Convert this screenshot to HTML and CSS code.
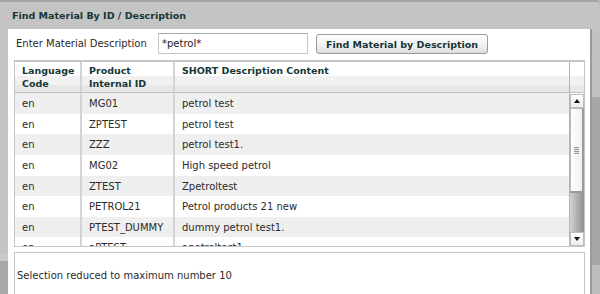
FILE: index.html
```html
<!DOCTYPE html>
<html lang="en">
<head>
    <meta charset="UTF-8">
    <meta name="viewport" content="width=device-width, initial-scale=1.0">
    <title>Find Material By ID / Description</title>
    <link rel="stylesheet" href="styles.css">
</head>
<body>
    <div class="window">
        <div class="title-bar">Find Material By ID / Description</div>
        <div class="frame">
            <div class="gutter-left"></div>
            <div class="content">
                <div class="search-row">
                    <label for="matdesc">Enter Material Description</label>
                    <input type="text" id="matdesc" value="*petrol*">
                    <button type="button">Find Material by Description</button>
                </div>
                <div class="grid">
                    <div class="grid-main">
                        <div class="grid-head">
                            <div class="cell c1">Language<br>Code</div>
                            <div class="cell c2">Product<br>Internal ID</div>
                            <div class="cell c3">SHORT Description Content</div>
                        </div>
                        <div class="grid-body">
                            <div class="row alt"><div class="cell c1">en</div><div class="cell c2">MG01</div><div class="cell c3">petrol test</div></div>
                            <div class="row"><div class="cell c1">en</div><div class="cell c2">ZPTEST</div><div class="cell c3">petrol test</div></div>
                            <div class="row alt"><div class="cell c1">en</div><div class="cell c2">ZZZ</div><div class="cell c3">petrol test1.</div></div>
                            <div class="row"><div class="cell c1">en</div><div class="cell c2">MG02</div><div class="cell c3">High speed petrol</div></div>
                            <div class="row alt"><div class="cell c1">en</div><div class="cell c2">ZTEST</div><div class="cell c3">Zpetroltest</div></div>
                            <div class="row"><div class="cell c1">en</div><div class="cell c2">PETROL21</div><div class="cell c3">Petrol products 21 new</div></div>
                            <div class="row alt"><div class="cell c1">en</div><div class="cell c2">PTEST_DUMMY</div><div class="cell c3">dummy petrol test1.</div></div>
                            <div class="row"><div class="cell c1">en</div><div class="cell c2">aPTEST</div><div class="cell c3">apetroltest1</div></div>
                        </div>
                    </div>
                    <div class="scroll-col">
                        <div class="scroll-head"></div>
                        <div class="scrollbar">
                            <div class="sb-btn"><span class="arrow-up"></span></div>
                            <div class="sb-thumb"><span class="grip"></span></div>
                            <div class="sb-track"></div>
                            <div class="sb-btn"><span class="arrow-down"></span></div>
                        </div>
                    </div>
                </div>
                <div class="message">Selection reduced to maximum number 10</div>
            </div>
            <div class="gutter-right"></div>
        </div>
    </div>
</body>
</html>
```

FILE: styles.css
```css
html, body {
    margin: 0;
    padding: 0;
    height: 294px;
    overflow: hidden;
}
body {
    font-family: "DejaVu Sans", Verdana, sans-serif;
    font-size: 10px;
    color: #2b2b2b;
    background-color: #c2c2c2;
}
.window {
    height: 294px;
    display: flex;
    flex-direction: column;
}
.title-bar {
    height: 28px;
    border-top: 2px solid #a5a5a5;
    background-color: #c4c4c4;
    border-top-right-radius: 4px;
    padding-left: 12px;
    line-height: 27px;
    font-size: 9.5px;
    font-weight: bold;
    color: #143636;
}
.frame {
    flex: 1;
    display: flex;
}
.gutter-left {
    width: 8px;
    background: linear-gradient(to bottom, #c3c3c3 0, #c3c3c3 225px, #c9c9c9 225px, #c9c9c9 232px, #a9a9a9 232px);
}
.gutter-right {
    width: 10px;
    box-sizing: border-box;
    border-left: 2px solid #9a9a9a;
    background: linear-gradient(to bottom, #c2c2c2 0, #c2c2c2 68px, #a7a7a7 68px, #a7a7a7 236px, #bdbdbd 236px);
}
.content {
    flex: 1;
    background-color: #fff;
    padding: 4px 3px 0 6px;
}
.search-row {
    display: flex;
    align-items: center;
    height: 21px;
}
.search-row label {
    width: 142px;
    margin-left: 2px;
}
.search-row input[type="text"] {
    width: 150px;
    height: 21px;
    box-sizing: border-box;
    border: 1px solid #c6c6c6;
    border-top-color: #a9a9a9;
    padding: 0 3px;
    margin: 0;
    font-family: inherit;
    font-size: 10px;
    color: #222;
}
.search-row button {
    margin-left: 8px;
    width: 172px;
    height: 20px;
    margin-top: 1px;
    border: 1px solid #9b9b9b;
    border-radius: 3px;
    background: linear-gradient(to bottom, #ffffff, #f1f1f1 60%, #dcdcdc);
    font-family: inherit;
    font-size: 9.5px;
    font-weight: bold;
    color: #143636;
    padding: 0;
    cursor: pointer;
}
.grid {
    margin-top: 6px;
    width: 571px;
    height: 187px;
    box-sizing: border-box;
    border: 1px solid #c6c6c6;
    border-top-width: 2px;
    display: flex;
}
.grid-main {
    width: 555px;
    overflow: hidden;
}
.grid-head, .row {
    display: flex;
}
.grid-head {
    height: 30px;
    border-bottom: 1px solid #c2c2c2;
    background: linear-gradient(to bottom, #fff 0, #fff 14px, #f1f1f1 14px, #f1f1f1 23px, #e8e8e8 23px);
    font-size: 9.5px;
    font-weight: bold;
    color: #143636;
    line-height: 13px;
}
.grid-head .cell {
    padding-top: 2px;
}
.cell {
    box-sizing: border-box;
    padding-left: 7px;
    white-space: nowrap;
}
.c1 {
    width: 67px;
    border-right: 2px solid #d4d4d4;
}
.c2 {
    width: 93px;
    border-right: 2px solid #d4d4d4;
}
.c3 {
    flex: 1;
}
.row {
    height: 20.65px;
    line-height: 22px;
}
.row.alt {
    background-color: #efefef;
}
.scroll-col {
    width: 14px;
    border-left: 1px solid #b4b4b4;
    display: flex;
    flex-direction: column;
}
.scroll-head {
    height: 30px;
    border-bottom: 1px solid #c2c2c2;
    background: linear-gradient(to bottom, #fff 0, #fff 14px, #f1f1f1 14px, #f1f1f1 23px, #e8e8e8 23px);
}
.scrollbar {
    flex: 1;
    display: flex;
    flex-direction: column;
    padding-top: 1px;
}
.sb-btn {
    height: 14px;
    box-sizing: border-box;
    border: 1px solid #bdbdbd;
    background: linear-gradient(to bottom, #fff, #ececec);
    display: flex;
    align-items: center;
    justify-content: center;
}
.arrow-up {
    width: 0;
    height: 0;
    border-left: 3px solid transparent;
    border-right: 3px solid transparent;
    border-bottom: 4px solid #111;
}
.arrow-down {
    width: 0;
    height: 0;
    border-left: 3px solid transparent;
    border-right: 3px solid transparent;
    border-top: 4px solid #111;
}
.sb-thumb {
    height: 85px;
    box-sizing: border-box;
    border: 1px solid #b8b8b8;
    border-right: 2px solid #9a9a9a;
    border-bottom: 2px solid #9a9a9a;
    background: linear-gradient(to right, #fff, #f0f0f0);
    display: flex;
    align-items: center;
    justify-content: center;
}
.grip {
    width: 5px;
    height: 7px;
    background: repeating-linear-gradient(to bottom, #9a9a9a 0, #9a9a9a 1px, #e8e8e8 1px, #e8e8e8 2px);
}
.sb-track {
    flex: 1;
    background: linear-gradient(to right, #d2d2d2, #8f8f8f);
}
.message {
    margin-top: 5px;
    width: 571px;
    height: 60px;
    box-sizing: border-box;
    border: 1px solid #c6c6c6;
    padding: 17px 0 0 2px;
    color: #2b2b2b;
}
```
